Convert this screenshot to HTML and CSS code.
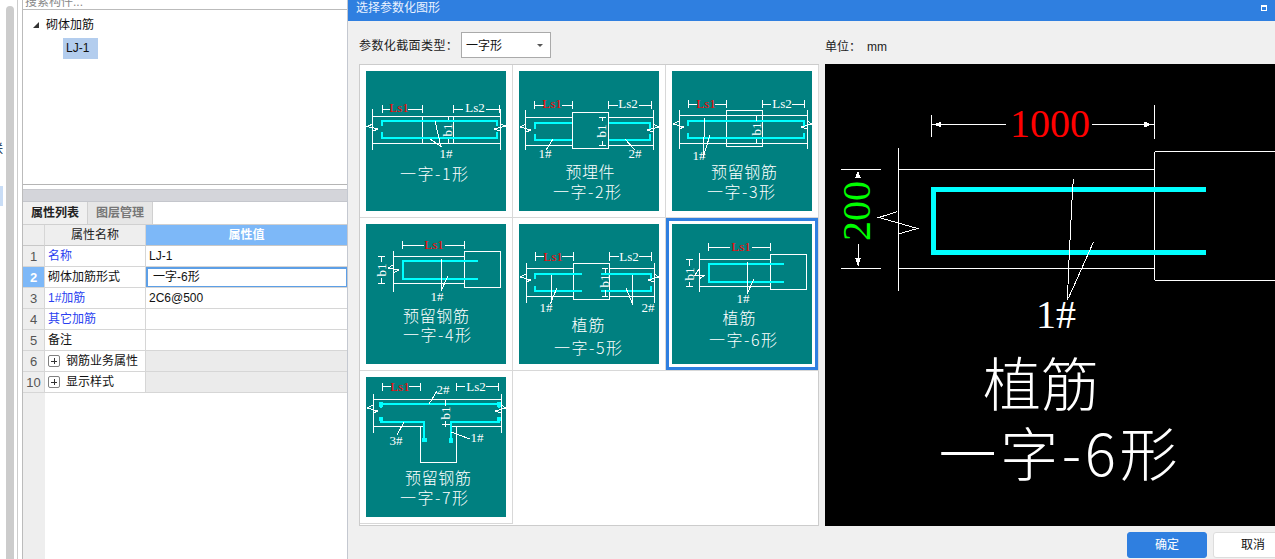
FILE: index.html
```html
<!DOCTYPE html>
<html lang="zh">
<head>
<meta charset="utf-8">
<title>选择参数化图形</title>
<link rel="stylesheet" href="styles.css">
</head>
<body>
<div class="page">
  <aside class="rail">
    <div class="rail-edge"><span class="rail-glyph">联</span><span class="rail-sel"></span></div>
    <div class="rail-scroll"></div>
    <div class="rail-line"></div>
  </aside>
  <section class="props">
    <div class="search"><span>搜索构件...</span></div>
    <div class="tree">
      <div class="tree-root"><span class="tree-arrow"></span>砌体加筋</div>
      <div class="tree-leaf"><span>LJ-1</span></div>
    </div>
    <div class="band"></div>
    <div class="tabs"><span class="tab tab-on">属性列表</span><span class="tab">图层管理</span></div>
    <div class="table-wrap">
      <table class="ptable">
        <colgroup><col class="c-n"><col class="c-k"><col class="c-v"></colgroup>
        <tr class="hd"><th class="rh"></th><th>属性名称</th><th class="hv">属性值</th></tr>
        <tr><td class="rh">1</td><td class="blue">名称</td><td>LJ-1</td></tr>
        <tr><td class="rh rh-on">2</td><td>砌体加筋形式</td><td class="edit">一字-6形</td></tr>
        <tr><td class="rh">3</td><td class="blue">1#加筋</td><td>2C6@500</td></tr>
        <tr><td class="rh">4</td><td class="blue">其它加筋</td><td></td></tr>
        <tr><td class="rh">5</td><td>备注</td><td></td></tr>
        <tr><td class="rh">6</td><td><span class="plus"></span>钢筋业务属性</td><td class="grey"></td></tr>
        <tr><td class="rh">10</td><td><span class="plus"></span>显示样式</td><td class="grey"></td></tr>
      </table>
    </div>
  </section>
  <main class="dialog">
    <header class="titlebar"><span>选择参数化图形</span><span class="restore"></span></header>
    <div class="toolbar">
      <div class="type-col"><span class="type-label">参数化截面类型：</span><span class="select">一字形<i class="caret"></i></span></div>
      <div class="unit"><span>单位：</span><span class="mm">mm</span></div>
    </div>
    <div class="body">
      <div class="grid">
        <div class="cell"><svg class="thumb" viewBox="0 0 140 140">
          <path class="ln" d="M16.5 34V42M16.5 38.5H24M42 38.5H56.5M56.5 34V42M87.5 34V42M87.5 38.5H97M120 38.5H133.5M133.5 34V42"/>
          <path class="ln" d="M6.5 38V79M134.5 38V79M6.5 45.5H134.5M6.5 72.5H134.5M56.5 45V72M87.5 45V72M82.5 45V49M82.5 66V72"/>
          <path class="ln" d="M7 53L1 55.5L12 58L7 60M134 53L140 55L128 58L134 60"/>
          <path class="cy" d="M16 55V50H131V55M16 61V67H131V61"/>
          <path class="ln" d="M69 50L75 76M64 68L76 76"/>
          <text class="lb red" x="33" y="41">Ls1</text><text class="lb" x="109" y="41">Ls2</text>
          <text class="lb" transform="translate(86 59) rotate(-90)">b1</text>
          <text class="lb" x="80" y="87">1#</text>
          <text class="ttl" x="68" y="109" textLength="68">一字-1形</text>
        </svg></div>
        <div class="cell"><svg class="thumb" viewBox="0 0 140 140">
          <path class="ln" d="M15.5 30V38M15.5 34.5H25M43 34.5H53.5M53.5 30V38M89.5 30V38M89.5 34.5H99M120 34.5H132.5M132.5 30V38"/>
          <path class="ln" d="M6.5 39V79M134.5 39V79M6.5 46.5H53M6.5 74.5H53M90 46.5H134M90 74.5H134"/>
          <path class="ln" d="M53.5 41.5H89.5V77.5H53.5Z"/>
          <path class="ln" d="M7 53L1 56L12 59L7 61M134 53L140 56L128 59L134 61"/>
          <path class="cy" d="M53 52H16V58M16 63V69H53M90 52H131V58M131 63V69H90"/>
          <path class="ln" d="M34 68L27 79M106 68L116 79M80 46.5H87M80 74.5H87M83.5 47V50M83.5 70V74"/>
          <text class="lb red" x="33" y="37">Ls1</text><text class="lb" x="109" y="37">Ls2</text>
          <text class="lb" transform="translate(87 60) rotate(-90)">b1</text>
          <text class="lb" x="26" y="87">1#</text><text class="lb" x="116" y="87">2#</text>
          <text class="ttl" x="71" y="107" textLength="49">预埋件</text>
          <text class="ttl" x="68" y="127" textLength="68">一字-2形</text>
        </svg></div>
        <div class="cell"><svg class="thumb" viewBox="0 0 140 140">
          <path class="ln" d="M16.5 29V37M16.5 33.5H25M43 33.5H54.5M54.5 29V37M90.5 29V37M90.5 33.5H99M120 33.5H132.5M132.5 29V37"/>
          <path class="ln" d="M7.5 39V78M135.5 39V78M7.5 44.5H135.5M7.5 72.5H135.5"/>
          <path class="ln" d="M54.5 39.5H90.5V75.5H54.5Z"/>
          <path class="ln" d="M7 50L1 53L12 56L7 58M135 50L140 53L129 56L135 58"/>
          <path class="cy" d="M16 55V50H132V55M16 62V67H132V62"/>
          <path class="ln" d="M33 47L31 85M38 64L31 87M82 44.5H88M82 72.5H88M84.5 45V50M84.5 68V72"/>
          <text class="lb red" x="34" y="37">Ls1</text><text class="lb" x="110" y="37">Ls2</text>
          <text class="lb" transform="translate(89 58) rotate(-90)">b1</text>
          <text class="lb" x="27" y="89">1#</text>
          <text class="ttl" x="72" y="107" textLength="66">预留钢筋</text>
          <text class="ttl" x="69" y="127" textLength="68">一字-3形</text>
        </svg></div>
        <div class="cell"><svg class="thumb" viewBox="0 0 140 140">
          <path class="ln" d="M36.5 17V25M36.5 21.5H58M79 21.5H98.5M98.5 17V25"/>
          <path class="ln" d="M27.5 27V68M27.5 32.5H98M27.5 59.5H98"/>
          <path class="ln" d="M98.5 27.5H134.5V63.5H98.5Z"/>
          <path class="ln" d="M27 41L22 44L33 46L27 49M12 32.5H19M12 59.5H19M15.5 33V38M15.5 54V59"/>
          <path class="cy" d="M112 37H37V55H112"/>
          <path class="ln" d="M76 35L75 67M82 52L75 67"/>
          <text class="lb red" x="68" y="25">Ls1</text>
          <text class="lb" transform="translate(20 46) rotate(-90)">b1</text>
          <text class="lb" x="71" y="77">1#</text>
          <text class="ttl" x="70" y="98" textLength="66">预留钢筋</text>
          <text class="ttl" x="71" y="117" textLength="68">一字-4形</text>
        </svg></div>
        <div class="cell"><svg class="thumb" viewBox="0 0 140 140">
          <path class="ln" d="M16.5 28V37M16.5 32.5H25M43 32.5H54.5M54.5 28V37M90.5 28V37M90.5 32.5H100M120 32.5H132.5M132.5 28V37"/>
          <path class="ln" d="M7.5 39V79M135.5 39V79M7.5 44.5H54M7.5 72.5H54M90 44.5H135M90 72.5H135"/>
          <path class="ln" d="M54.5 39.5H90.5V75.5H54.5Z"/>
          <path class="ln" d="M7 50L1 53L12 56L7 58M135 50L140 53L129 56L135 58"/>
          <path class="cy" d="M63 50H16V55M16 62V67H63M82 50H132V55M132 62V67H82"/>
          <path class="ln" d="M33 51L32 80M38 64L31 80M113 51L114 81M107 64L114 81M83 44.5H89M83 72.5H89M86.5 45V49M86.5 66V72"/>
          <text class="lb red" x="34" y="37">Ls1</text><text class="lb" x="110" y="37">Ls2</text>
          <text class="lb" transform="translate(90 57) rotate(-90)">b1</text>
          <text class="lb" x="27" y="88">1#</text><text class="lb" x="129" y="88">2#</text>
          <text class="ttl" x="69" y="107" textLength="33">植筋</text>
          <text class="ttl" x="69" y="130" textLength="68">一字-5形</text>
        </svg></div>
        <div class="cell selected"><svg class="thumb" viewBox="0 0 140 140">
          <path class="ln" d="M36.5 19V27M36.5 23.5H58M80 23.5H98.5M98.5 19V27"/>
          <path class="ln" d="M27.5 29V68M27.5 35.5H98M27.5 62.5H98"/>
          <path class="ln" d="M98.5 30.5H134.5V65.5H98.5Z"/>
          <path class="ln" d="M27 45L23 51L33 51L27 55M14 35.5H21M14 62.5H21M17.5 36V42M17.5 58V62"/>
          <path class="cy" d="M112 40H37V58H112"/>
          <path class="ln" d="M76 38L75 70M82 55L75 70"/>
          <text class="lb red" x="69" y="27">Ls1</text>
          <text class="lb" transform="translate(22 50) rotate(-90)">b1</text>
          <text class="lb" x="71" y="79">1#</text>
          <text class="ttl" x="67" y="100" textLength="33">植筋</text>
          <text class="ttl" x="71" y="122" textLength="68">一字-6形</text>
        </svg></div>
        <div class="cell"><svg class="thumb" viewBox="0 0 140 140">
          <path class="ln" d="M16.5 6V14M16.5 9.5H25M43 9.5H54.5M54.5 6V14M90.5 6V14M90.5 9.5H99M120 9.5H132.5M132.5 6V14"/>
          <path class="ln" d="M7.5 17V56M135.5 17V56M7.5 22.5H135.5M7.5 49.5H58M85 49.5H135.5"/>
          <path class="ln" d="M54.5 49V85.5H90.5V49"/>
          <path class="ln" d="M7 28L1 31L12 34L7 36M135 28L140 31L129 34L135 36"/>
          <path class="cy" d="M15 31V27H133V31M15 41V45H58V64M133 41V45H85V64"/>
          <path class="cyd" d="M13 25H17V30H13ZM131 25H135V30H131ZM13 40H17V44H13ZM131 40H135V44H131ZM56 61H61V65H56ZM83 61H87V66H83Z"/>
          <path class="ln" d="M71 14L63 27M38 45L31 58M85 55L104 62M79.5 22V29M79.5 44V50M76 47H84"/>
          <text class="lb red" x="34" y="14">Ls1</text><text class="lb" x="110" y="14">Ls2</text>
          <text class="lb" transform="translate(84 36) rotate(-90)">b1</text>
          <text class="lb" x="77" y="17">2#</text><text class="lb" x="30" y="68">3#</text><text class="lb" x="111" y="65">1#</text>
          <text class="ttl" x="72" y="107" textLength="66">预留钢筋</text>
          <text class="ttl" x="68" y="127" textLength="68">一字-7形</text>
        </svg></div>
      </div>
      <div class="preview"><svg class="canvas" viewBox="0 0 450 462">
        <path class="ln" d="M106.5 51V73M329.5 41V75M107 60.5H181M267 60.5H329M73.5 84V227M74 105.5H329M74 204.5H329M329.5 87.5H450M329.5 88V216M329.5 216.5H450M16 105.5H56M16 204.5H56M33.5 180V202"/>
        <path class="wf" d="M109 60.5L116 57.5V63.5ZM327 60.5L319 57.5V63.5ZM33 107L30 114H36ZM33 202L30 194H36Z"/>
        <path class="ln" d="M72.5 147.5L54 153.5L92.5 164.5L73.5 170"/>
        <path class="cy-big" d="M381 125.5H108.5V188.5H381"/>
        <path class="ln" d="M248.5 115L247.5 126L246.5 146L245.5 166L244.5 186L243.5 206L242.5 236M268.5 178L243.5 234"/>
        <text class="dim red" x="225" y="73">1000</text>
        <text class="dim green" transform="translate(45 147) rotate(-90)">200</text>
        <text class="dim white" x="231" y="264">1#</text>
        <text class="big" x="216" y="342">植筋</text>
        <text class="big" x="233" y="412" textLength="239">一字-6形</text>
      </svg></div>
    </div>
    <footer class="footer">
      <button class="btn btn-ok" type="button">确定</button>
      <button class="btn" type="button">取消</button>
    </footer>
  </main>
</div>
</body>
</html>
```
FILE: styles.css
```css
html, body { margin: 0; padding: 0; }
body { width: 1275px; height: 559px; overflow: hidden; background: #fff; color: #111; font: 12px/1 "Liberation Sans", "Noto Sans CJK SC", sans-serif; }
.page { display: flex; width: 1275px; height: 559px; overflow: hidden; }

.rail { display: flex; width: 22px; flex: none; }
.rail-edge { width: 6px; overflow: hidden; display: flex; flex-direction: column; padding-top: 143px; box-sizing: border-box; }
.rail-glyph { display: block; margin-left: -9px; width: 12px; height: 12px; color: #024; }
.rail-sel { display: block; width: 3px; height: 20px; margin-top: 31px; background: #c9ddf6; }
.rail-scroll { width: 8px; margin-top: 6px; background: #ccc; border-radius: 4px 4px 0 0; }
.rail-line { width: 1px; margin-left: 3px; background: #ccc; }

.props { width: 325px; flex: none; display: flex; flex-direction: column; border-left: 1px solid #bbb; box-sizing: border-box; }
.search { height: 9px; overflow: hidden; color: #888; padding-left: 2px; border-bottom: 1px solid #bbb; }
.search span { display: block; margin-top: -4px; }
.tree { flex: none; border-bottom: 1px solid #b5b5b5; padding-top: 9px; height: 165px; }
.tree-root { display: flex; align-items: center; height: 12px; padding-left: 10px; }
.tree-arrow { width: 0; height: 0; margin-right: 7px; border-left: 6px solid transparent; border-bottom: 6px solid #333; }
.tree-leaf { margin: 7px 0 0 40px; }
.tree-leaf span { display: inline-block; width: 35px; height: 21px; line-height: 21px; padding-left: 3px; box-sizing: border-box; background: #b3cdee; }
.band { height: 11px; margin-top: 4px; background: #d4d5da; border-top: 1px solid #c8c9ce; border-bottom: 1px solid #c4c6cc; flex: none; }
.tabs { display: flex; flex: none; background: #fff; border-bottom: 1px solid #d0d0d0; height: 22px; }
.tab { width: 64px; text-align: center; line-height: 23px; background: #e6e6e6; color: #777; font-weight: 700; border-right: 1px solid #d0d0d0; }
.tab-on { background: #f0f0f0; color: #222; }
.table-wrap { flex: 1; background: linear-gradient(to right, #eee 22px, #fff 22px); }
.ptable { border-collapse: separate; border-spacing: 0; table-layout: fixed; width: 324px; }
.c-n { width: 22px; }
.c-k { width: 101px; }
.c-v { width: 201px; }
.ptable th, .ptable td { height: 21px; padding: 0 0 0 3px; box-sizing: border-box; border-right: 1px solid #d6d6d6; border-bottom: 1px solid #d6d6d6; background: #fff; font-size: 12px; font-weight: 400; text-align: left; white-space: nowrap; overflow: hidden; }
.ptable td:last-child, .ptable th:last-child { border-right: 0; }
.ptable th { background: #eee; text-align: center; padding: 0; color: #222; border-bottom-color: #c8c8c8; }
.ptable .hv { background: #7db8f8; color: #fff; font-weight: 700; }
.ptable .rh { background: #eee; color: #555; text-align: center; padding: 0; font-size: 13px; }
.ptable .rh-on { background: #7db8f8; color: #fff; font-weight: 700; }
.ptable .blue { color: #2a3ff0; }
.ptable .grey { background: #ebebeb; }
.ptable .edit { padding-left: 7px; box-shadow: inset 0 0 0 1px #5d9fe6, inset 2px 2px 0 0 #5d9fe6, inset 0 -1px 0 0 #5d9fe6; }
.plus { display: inline-block; width: 12px; height: 12px; margin: 0 6px 0 0; vertical-align: -2px; box-sizing: border-box; border: 1px solid #808080; border-radius: 2px; background: linear-gradient(#333, #333) center / 6px 1px no-repeat, linear-gradient(#333, #333) center / 1px 6px no-repeat; }

.dialog { flex: 1; display: flex; flex-direction: column; background: #f0f0f0; border-left: 1px solid #c4c8d0; min-width: 0; }
.titlebar { display: flex; justify-content: space-between; align-items: flex-start; height: 21px; flex: none; padding: 2px 8px 0 8px; box-sizing: border-box; background: #2f7fe0; color: #eaf2ff; }
.restore { width: 6px; height: 6px; margin: 3px 0 0; box-sizing: border-box; border: 1px solid #fff; border-top-width: 2px; }
.toolbar { display: flex; height: 43px; flex: none; padding-top: 11px; box-sizing: border-box; align-items: flex-start; }
.type-col { width: 466px; margin-left: 11px; display: flex; align-items: center; flex: none; }
.type-label { width: 102px; padding-top: 2px; letter-spacing: .4px; color: #222; }
.select { position: relative; display: block; width: 90px; height: 26px; line-height: 26px; padding-left: 4px; box-sizing: border-box; background: #fff; border: 1px solid #aaa; }
.caret { position: absolute; right: 7px; top: 11px; width: 0; height: 0; border: 3px solid transparent; border-top: 3px solid #555; border-bottom: 0; }
.unit { margin-top: 9px; color: #222; }
.mm { margin-left: 6px; }
.body { display: flex; height: 462px; flex: none; padding-left: 11px; gap: 6px; }
.grid { display: grid; width: 460px; height: 462px; flex: none; box-sizing: border-box; padding: 1px 0 0 1px; grid-template-columns: 153px 153px 153px; grid-auto-rows: 153px; background: #fff; box-shadow: inset 0 0 0 1px #ccc; }
.cell { padding: 6px; box-sizing: border-box; border-right: 1px solid #d8d8d8; border-bottom: 1px solid #d8d8d8; }
.cell.selected { box-shadow: inset 0 0 0 3px #2f7fe0; }
.thumb { display: block; width: 140px; height: 140px; background: #008080; shape-rendering: crispEdges; }
.preview { flex: none; width: 450px; height: 462px; background: #000; }
.canvas { display: block; width: 450px; height: 462px; shape-rendering: crispEdges; }
.ln { fill: none; stroke: #fff; stroke-width: 1; }
.wf { fill: #fff; stroke: none; }
.cy { fill: none; stroke: #0ff; stroke-width: 2; }
.cyd { fill: #0ff; stroke: none; }
.cy-big { fill: none; stroke: #0ff; stroke-width: 5; }
.lb { font: 13px "Liberation Serif", serif; fill: #fff; text-anchor: middle; }
.lb.red { fill: #f00; }
.ttl { font: 300 16px "Noto Sans CJK SC", sans-serif; fill: #fff; text-anchor: middle; }
.dim { font: 40px "Liberation Serif", serif; text-anchor: middle; }
.dim.red { fill: #f00; }
.dim.green { fill: #0f0; }
.dim.white { fill: #fff; }
.big { font: 300 58px "Noto Sans CJK SC", sans-serif; fill: #fff; text-anchor: middle; }
.footer { display: flex; gap: 6px; padding: 6px 0 0 779px; height: 33px; box-sizing: border-box; flex: none; }
.btn { flex: none; width: 80px; height: 26px; padding: 0; border: 1px solid #ddd; border-radius: 3px; background: #fff; color: #111; font: inherit; }
.btn-ok { background: #2f7fe0; border-color: #2f7fe0; color: #fff; }
```
